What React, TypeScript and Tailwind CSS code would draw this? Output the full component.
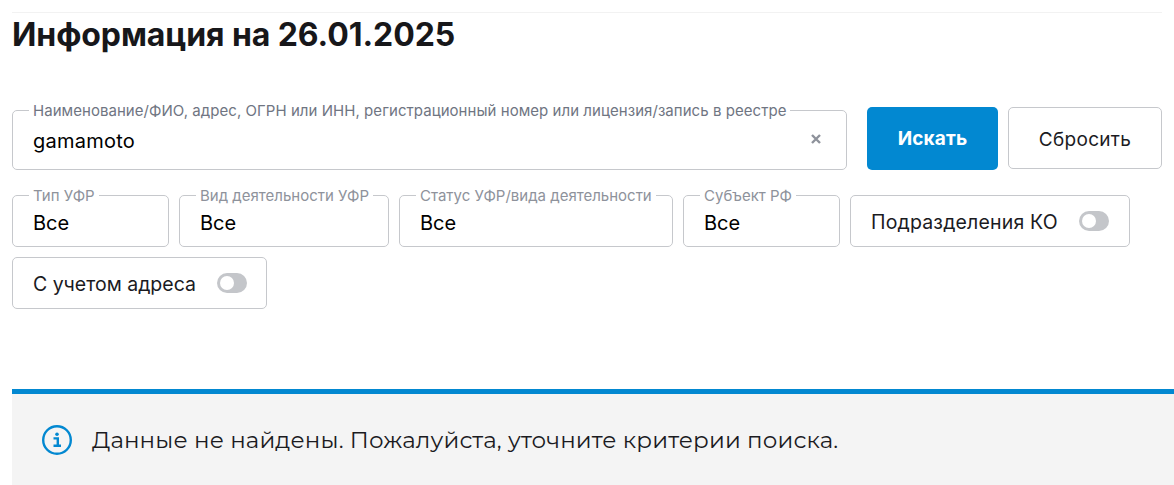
const font = "font-['Inter','Liberation_Sans',sans-serif]";

function Field({ label, width, labelColor = "text-[#8e929b]" }: { label: string; width: string; labelColor?: string }) {
  return (
    <fieldset className={`${width} h-[57px] -mt-[5px] shrink-0 rounded-[5px] border border-[#c6c8cc] pl-[16px] pr-[10px]`}>
      <legend className={`px-[4px] text-[15px] leading-[10px] h-[10px] translate-y-[1px] ${labelColor} whitespace-nowrap`}>{label}</legend>
      <div className="text-[20px] leading-[24px] text-black pl-[4px] mt-[11px]">Все</div>
    </fieldset>
  );
}

function Toggle({ label, width, tracking }: { label: string; width: string; tracking: string }) {
  return (
    <div className={`${width} h-[52px] shrink-0 rounded-[5px] border border-[#c6c8cc] pl-[20px] flex items-center gap-[21px]`}>
      <span className={`text-[19.5px] leading-[24px] text-[#1b1b1f] whitespace-nowrap translate-y-[1px] ${tracking}`}>{label}</span>
      <span className="w-[30px] h-[20px] rounded-full bg-[#c4c6ca] flex items-center pl-[3px]">
        <span className="w-[14px] h-[14px] rounded-full bg-white" />
      </span>
    </div>
  );
}

export default function App() {
  return (
    <div className={`${font} w-[1174px] h-[485px] overflow-hidden bg-white pl-[12px] pt-[12px]`}>
      <div className="h-px bg-[#f2f2f2] mr-[12px]" />
      <h1 className="text-[32px] leading-[44px] font-bold text-[#17171a] tracking-[-0.08px]">Информация на 26.01.2025</h1>

      <div className="flex mt-[50px] h-[63px]">
        <fieldset className="w-[835px] h-[65px] -mt-[2px] rounded-[5px] border border-[#c6c8cc] pl-[16px] pr-[24px]">
          <legend className="px-[4px] text-[15px] leading-[10px] h-[10px] translate-y-[1px] text-[#6f7582] whitespace-nowrap tracking-[0.05px]">Наименование/ФИО, адрес, ОГРН или ИНН, регистрационный номер или лицензия/запись в реестре</legend>
          <div className="flex items-center justify-between mt-[14px]">
            <span className="text-[20px] leading-[24px] tracking-[0.25px] text-black pl-[4px]">gamamoto</span>
            <svg width="10" height="10" viewBox="0 0 10 10" className="mr-[1px] -translate-y-[2px]">
              <path d="M1 1 L9 9 M9 1 L1 9" stroke="#8e929b" strokeWidth="2.4" />
            </svg>
          </div>
        </fieldset>
        <button className="ml-[20px] w-[131px] h-[63px] rounded-[5px] bg-[#0288d1] text-white text-[19px] font-bold tracking-[0.15px] pt-[2px]">Искать</button>
        <button className="ml-[10px] w-[154px] h-[62px] rounded-[5px] border border-[#c6c8cc] bg-white text-[19px] tracking-[0.3px] text-[#1b1b1f] pt-[4px]">Сбросить</button>
      </div>

      <div className="flex flex-wrap gap-x-[10px] gap-y-[10px] mt-[25px] w-[1150px]">
        <Field label="Тип УФР" width="w-[157px]" />
        <Field label="Вид деятельности УФР" width="w-[210px]" />
        <Field label="Статус УФР/вида деятельности" width="w-[274px]" />
        <Field label="Субъект РФ" width="w-[157px]" />
        <Toggle label="Подразделения КО" width="w-[280px]" tracking="tracking-[0.17px]" />
        <Toggle label="С учетом адреса" width="w-[255px]" tracking="tracking-[0px]" />
      </div>

      <div className="mt-[80px] h-[96px] border-t-[5px] border-[#0288d1] bg-[#f4f4f4] flex items-center pl-[30px] pb-[4px]">
        <svg width="30" height="30" viewBox="0 0 30 30" fill="none" className="translate-y-[2px]">
          <circle cx="15" cy="15" r="13.8" stroke="#0288d1" strokeWidth="2.4" />
          <circle cx="15" cy="9.3" r="1.8" fill="#0288d1" />
          <path d="M11.5 13.4 H15.8 V20.4 M11.5 20.8 H19" stroke="#0288d1" strokeWidth="2.4" />
        </svg>
        <span className="ml-[20px] text-[23px] tracking-[0.14px] text-[#1b1b1f] translate-y-[3px] font-['Montserrat','Open_Sans','Noto_Sans',sans-serif]">Данные не найдены. Пожалуйста, уточните критерии поиска.</span>
      </div>
    </div>
  );
}
